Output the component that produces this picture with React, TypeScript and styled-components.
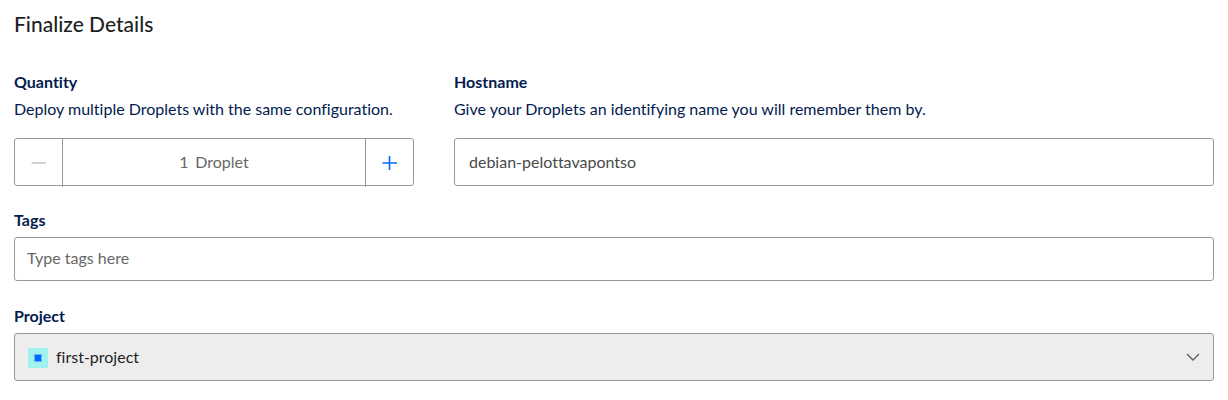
import React, { useState } from "react";
import styled, { createGlobalStyle } from "styled-components";

const GlobalStyle = createGlobalStyle`
  *, *::before, *::after { box-sizing: border-box; }
  body {
    margin: 0;
    background: #fff;
    color: #031b4e;
    font: 400 16px/22px Lato, "Liberation Sans", sans-serif;
    font-variant-ligatures: none;
  }
  button, input, select {
    font: inherit;
    font-variant-ligatures: none;
    color: inherit;
  }
`;

const Page = styled.form`
  padding: 10px 14px 16px;
`;

const Title = styled.h2`
  margin: 0 0 33px;
  color: #1f1f1f;
  font-size: 21px;
  font-weight: 500;
  line-height: 28px;
`;

const Columns = styled.div`
  display: grid;
  grid-template-columns: calc(100% / 3) minmax(0, 1fr);
  column-gap: 40px;
  margin-bottom: 23px;
`;

const Field = styled.div`
  & + & { margin-top: 24px; }
  ${Columns} > & { margin-top: 0; }
`;

const Label = styled.label`
  display: block;
  margin-bottom: 6px;
  font-weight: 700;
`;

const Hint = styled.p`
  margin: 0 0 19px;
  line-height: 20px;
`;

const TextInput = styled.input<{ $compact?: boolean }>`
  display: block;
  width: 100%;
  height: ${(p) => (p.$compact ? 44 : 48)}px;
  padding: ${(p) => (p.$compact ? "0 12px 4px" : "0 14px 2px")};
  border: 1px solid #999;
  border-radius: 3px;
  background: #fff;
  color: #4a4a4a;
  &::placeholder { color: #676767; opacity: 1; }
`;

const Stepper = styled.div`
  display: flex;
  height: 48px;
  border: 1px solid #999;
  border-radius: 3px;
`;

const StepButton = styled.button`
  display: flex;
  flex: 0 0 47px;
  align-items: center;
  justify-content: center;
  padding: 0;
  border: 0;
  background: none;
  color: #0069ff;
  cursor: pointer;
  &:disabled { color: #ccc; cursor: default; }
`;

const Amount = styled.div`
  display: flex;
  flex: 1;
  align-items: center;
  justify-content: center;
  gap: 7px;
  height: 48px;
  padding-bottom: 2px;
  border: solid #999;
  border-width: 0 1px;
  color: #676767;
`;

const AmountInput = styled.input`
  width: 9px;
  padding: 0;
  border: 0;
  outline: 0;
  background: none;
  text-align: right;
`;

const SelectBox = styled.div`
  position: relative;
`;

const Select = styled.select`
  display: block;
  width: 100%;
  height: 48px;
  padding: 0 40px 0 41px;
  border: 1px solid #999;
  border-radius: 3px;
  background: #ededed;
  color: #1f1f1f;
  appearance: none;
`;

const ProjectIcon = styled.svg`
  position: absolute;
  top: 15px;
  left: 14px;
  pointer-events: none;
`;

const Chevron = styled.svg`
  position: absolute;
  top: 20px;
  right: 14px;
  pointer-events: none;
`;

export default function App() {
  const [count, setCount] = useState(1);
  const [hostname, setHostname] = useState("debian-pelottavapontso");

  return (
    <>
      <GlobalStyle />
      <Page onSubmit={(e) => e.preventDefault()}>
        <Title>Finalize Details</Title>
        <Columns>
          <Field>
            <Label htmlFor="quantity">Quantity</Label>
            <Hint>Deploy multiple Droplets with the same configuration.</Hint>
            <Stepper>
              <StepButton
                type="button"
                aria-label="Decrease quantity"
                disabled={count <= 1}
                onClick={() => setCount(count - 1)}
              >
                <svg width="16" height="16" viewBox="0 0 16 16" aria-hidden="true">
                  <path d="M0.5 9H15" stroke="currentColor" strokeWidth="1.7" />
                </svg>
              </StepButton>
              <Amount>
                <AmountInput
                  id="quantity"
                  inputMode="numeric"
                  value={count}
                  onChange={(e) => setCount(Math.max(1, Number(e.target.value) || 1))}
                />
                <span>{count === 1 ? "Droplet" : "Droplets"}</span>
              </Amount>
              <StepButton
                type="button"
                aria-label="Increase quantity"
                onClick={() => setCount(count + 1)}
              >
                <svg width="16" height="16" viewBox="0 0 16 16" aria-hidden="true">
                  <path d="M0.5 9H15M7.5 2V16" stroke="currentColor" strokeWidth="1.6" />
                </svg>
              </StepButton>
            </Stepper>
          </Field>
          <Field>
            <Label htmlFor="hostname">Hostname</Label>
            <Hint>Give your Droplets an identifying name you will remember them by.</Hint>
            <TextInput
              id="hostname"
              value={hostname}
              onChange={(e) => setHostname(e.target.value)}
            />
          </Field>
        </Columns>
        <Field>
          <Label htmlFor="tags">Tags</Label>
          <TextInput id="tags" $compact placeholder="Type tags here" />
        </Field>
        <Field>
          <Label htmlFor="project">Project</Label>
          <SelectBox>
            <Select id="project" defaultValue="first-project">
              <option value="first-project">first-project</option>
            </Select>
            <ProjectIcon width="20" height="20" viewBox="0 0 20 20" aria-hidden="true">
              <rect width="20" height="20" rx="1" fill="#9ff2ee" />
              <rect x="6" y="6" width="8" height="8" fill="#63b5fb" />
              <rect x="7" y="7" width="6" height="6" fill="#0069ff" />
            </ProjectIcon>
            <Chevron width="14" height="8" viewBox="0 0 14 8" aria-hidden="true">
              <path d="M1 1L7 7L13 1" fill="none" stroke="#5f5f5f" strokeWidth="1.4" />
            </Chevron>
          </SelectBox>
        </Field>
      </Page>
    </>
  );
}
